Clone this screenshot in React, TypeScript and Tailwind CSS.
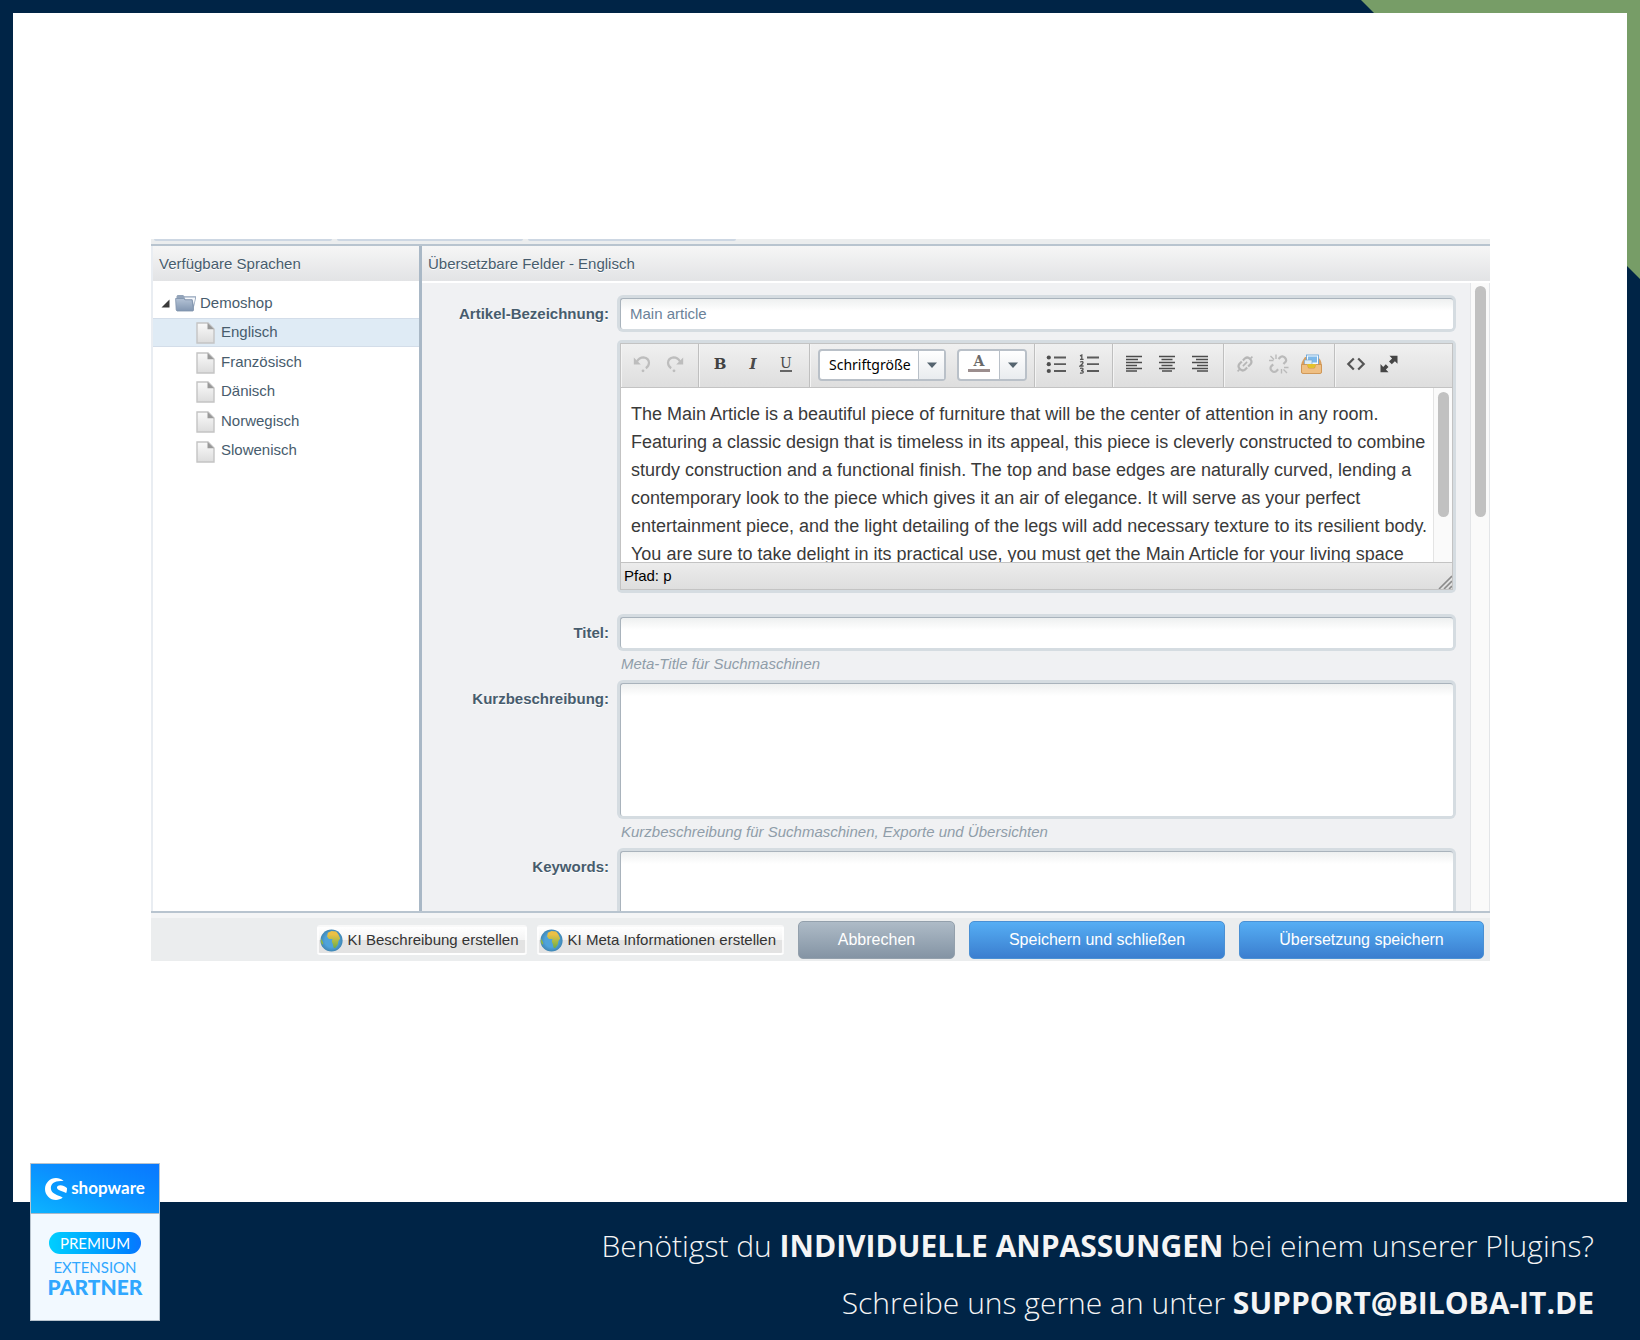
import type { ReactNode } from "react";
import { SiShopware } from "react-icons/si";

const LANGUAGES = ["Englisch", "Französisch", "Dänisch", "Norwegisch", "Slowenisch"];

const ARTICLE_TEXT =
  "The Main Article is a beautiful piece of furniture that will be the center of attention in any room. Featuring a classic design that is timeless in its appeal, this piece is cleverly constructed to combine sturdy construction and a functional finish. The top and base edges are naturally curved, lending a contemporary look to the piece which gives it an air of elegance. It will serve as your perfect entertainment piece, and the light detailing of the legs will add necessary texture to its resilient body. You are sure to take delight in its practical use, you must get the Main Article for your living space";

const FIELD =
  "block w-full rounded-[3px] border-t border-l border-[#a9b3bc] bg-white bg-linear-to-b from-[#eef0f0] to-white to-[12px] px-[9px] text-[15px] text-[#6b8299] ring-3 ring-[#d5dce1] outline-none resize-none";

function FolderIcon() {
  return (
    <svg width="22" height="18" viewBox="0 0 22 18" aria-hidden="true">
      <defs>
        <linearGradient id="folder" x1="0" y1="0" x2="0" y2="1">
          <stop offset="0" stopColor="#b4c3d6" />
          <stop offset="1" stopColor="#8296b1" />
        </linearGradient>
      </defs>
      <path d="M1.5 6V2.2L2.5 1H8L9.5 2.2H21V4L18.5 15L17 16Z" fill="#93a4ba" />
      <path d="M9.5 3.5H20.2L18.8 11L17.6 5.500H10.500Z" fill="#f6f8fb" />
      <path d="M.6 4.500H8.500L10 5.800H17L18.600 16L18 17H2L1.200 16Z" fill="url(#folder)" stroke="#7f92ab" strokeWidth=".8" />
    </svg>
  );
}

function PageIcon() {
  return (
    <svg width="19" height="22" viewBox="0 0 19 22" aria-hidden="true">
      <defs>
        <linearGradient id="page" x1="0" y1="0" x2="0" y2="1">
          <stop offset="0" stopColor="#fafafa" />
          <stop offset="1" stopColor="#dcdcdc" />
        </linearGradient>
      </defs>
      <path d="M1 1H12L18 7V21H1Z" fill="url(#page)" stroke="#c4c4c4" strokeWidth="1.4" />
      <path d="M11.5 1L18 7.2H11.5Z" fill="#999" />
    </svg>
  );
}

function GlobeIcon() {
  return (
    <svg width="23" height="23" viewBox="0 0 22 22" aria-hidden="true">
      <defs>
        <linearGradient id="land" x1="0" y1="0" x2="0" y2="1">
          <stop offset="0.2" stopColor="#ecc044" />
          <stop offset="0.6" stopColor="#a9bb45" />
          <stop offset="1" stopColor="#6faa48" />
        </linearGradient>
        <radialGradient id="sea">
          <stop offset="0.6" stopColor="#4fa3da" />
          <stop offset="1" stopColor="#3f86b4" />
        </radialGradient>
      </defs>
      <circle cx="11" cy="11" r="10.6" fill="url(#sea)" />
      <path d="M7.5 3.5L11 2L15.5 2.5L17.5 5L19.3 9L17.6 11.5L17 15L14.5 18.3L13 18L12.3 14.5L11.3 12L12 9.6L8.5 9.5L6.8 7.5Z" fill="url(#land)" />
      <path d="M1 9L2.6 12L3.2 14L2 15Q.3 12 1 9Z" fill="#8db548" />
    </svg>
  );
}

function ToolIcon({ label, children }: { label: string; children: ReactNode }) {
  return (
    <button type="button" aria-label={label} className="flex h-8 w-8 items-center justify-center">
      {children}
    </button>
  );
}

function ToolGroup({ children, last = false }: { children: ReactNode; last?: boolean }) {
  return (
    <div
      className={
        last
          ? "flex flex-1 items-start gap-px border-l border-[#f4f4f4] pt-1 pl-1"
          : "flex items-start gap-px border-r border-l border-r-[#bfbfbf] border-l-[#f4f4f4] pt-1 pr-[7px] pl-1"
      }
    >
      {children}
    </div>
  );
}

function UndoIcon({ flip = false }: { flip?: boolean }) {
  return (
    <svg width="20" height="20" viewBox="0 0 20 20" aria-hidden="true" className={flip ? "-scale-x-100" : ""}>
      <path d="M5 7.500Q7 3.300 11.500 3.300Q16.800 4 17 8.800Q16.800 12.500 13.800 14.300" fill="none" stroke="#bdbdbd" strokeWidth="2.2" />
      <path d="M1.800 3.500V10.500H8.800Z" fill="#bdbdbd" />
      <circle cx="11" cy="16.800" r="1.400" fill="#bdbdbd" />
    </svg>
  );
}

function ListIcon({ numbered = false }: { numbered?: boolean }) {
  return (
    <svg width="20" height="20" viewBox="0 0 20 20" aria-hidden="true">
      <path d="M8 3.5H20M8 10.2H20M8 17H20" stroke="#5b5b5b" strokeWidth="1.8" />
      {numbered ? (
        <path
          d="M1 1.8L2.8 1V5.4M1 5.4H4.6M1 8Q4.2 7 4 8.8Q3.6 10.2 1 12H4.6M1 14.4Q4.4 13.6 4 15.4Q3.8 16.4 2 16.6Q4.4 16.8 4.2 18.2Q3.8 19.6 1 19"
          fill="none"
          stroke="#555"
          strokeWidth="1.3"
        />
      ) : (
        <g fill="#4f4f4f">
          <circle cx="2.8" cy="3.5" r="2.1" />
          <circle cx="2.8" cy="10.2" r="2.1" />
          <circle cx="2.8" cy="17" r="2.1" />
        </g>
      )}
    </svg>
  );
}

const ALIGN_PATHS = {
  left: "M1 2.5H17M1 5.5H13M1 8.5H17M1 11.5H12M1 14.5H17M1 17H12",
  center: "M1 2.5H17M3.5 5.5H14.5M1 8.5H17M3.5 11.5H14.5M1 14.5H17M4 17H14",
  right: "M1 2.5H17M5 5.5H17M1 8.5H17M6 11.5H17M1 14.5H17M6 17H17",
};

function AlignIcon({ kind }: { kind: keyof typeof ALIGN_PATHS }) {
  return (
    <svg width="18" height="19" viewBox="0 0 18 19" aria-hidden="true">
      <path d={ALIGN_PATHS[kind]} stroke="#4c4c4c" strokeWidth="1.6" />
    </svg>
  );
}

function LinkIcon() {
  return (
    <svg width="18" height="18" viewBox="0 0 18 18" aria-hidden="true" fill="none" stroke="#b6b6b6">
      <g transform="rotate(-45 9 9)">
        <path d="M8.500 5H5Q1.800 5.500 1.800 9Q1.800 12.500 5 13H8M10 5H13Q16.200 5.500 16.200 9Q16.200 12.500 13 13H9.500" strokeWidth="2.200" />
        <path d="M-1.500 9H1.500M16.500 9H19.500M6 9H12" strokeWidth="1.600" />
      </g>
    </svg>
  );
}

function UnlinkIcon() {
  return (
    <svg width="21" height="20" viewBox="0 0 21 20" aria-hidden="true" fill="none" stroke="#bababa">
      <g transform="rotate(-45 10.5 10)">
        <path d="M6.500 6.500H3.500Q1 7 1 10Q1 13 3.500 13.500H6.500M14 6.500H17Q19.500 7 19.500 10Q19.500 13 17 13.500H14" strokeWidth="2.200" />
      </g>
      <path d="M8 .5V5M1 6.500H5.500M2.500 2L6 5.500M13.500 15V19.500M16 13.500H20.500M15.500 15.500L19 19" strokeWidth="1.400" />
    </svg>
  );
}

function MediaIcon() {
  return (
    <svg width="23" height="20" viewBox="0 0 23 20" aria-hidden="true">
      <path d="M3 6L5 3H18L20.500 6L21.500 9V19H1.500V9Z" fill="#d99f5e" />
      <rect x="6.500" y="1" width="12" height="11" fill="#f6fafd" stroke="#5f9fd6" strokeWidth=".8" />
      <rect x="8" y="2.500" width="9" height="6" fill="#7db9ea" />
      <path d="M4.500 6H12V12H4.500Z" fill="#dcecf8" stroke="#7fa9cb" strokeWidth=".7" />
      <path d="M1.500 10.500H7.500L8.500 14H14.500L15.500 10.500H21.500V18Q21.500 19.500 20 19.500H3Q1.500 19.500 1.500 18Z" fill="#efbf83" stroke="#cd9250" strokeWidth=".9" />
      <path d="M7.500 10H15.500V12L14 14H9L7.500 12Z" fill="#e3c22c" />
    </svg>
  );
}

function CodeIcon() {
  return (
    <svg width="20" height="14" viewBox="0 0 20 14" aria-hidden="true" fill="none" stroke="#555" strokeWidth="2.200">
      <path d="M7.800 1.500L2.300 7L7.800 12.500M12.200 1.500L17.700 7L12.200 12.500" />
    </svg>
  );
}

function ExpandIcon() {
  return (
    <svg width="18" height="18" viewBox="0 0 18 18" aria-hidden="true" fill="#454545">
      <path d="M9.500 .8H17.500V8.800L14.900 6.200L11.800 9.300L9 6.500L12.100 3.400Z" />
      <path d="M.5 9V17.200H8.500L5.900 14.600L8.500 12L5.800 9.300L3.200 11.900Z" />
    </svg>
  );
}

function Arrow() {
  return (
    <svg width="10" height="6" viewBox="0 0 10 6" aria-hidden="true">
      <path d="M0 .5H10L5 6Z" fill="#55646f" />
    </svg>
  );
}

function Toolbar() {
  return (
    <div className="flex h-[45px] items-stretch border border-[#c3c3c3] bg-linear-to-b from-[#f0f0f0] to-[#dedede]">
      <ToolGroup>
        <ToolIcon label="Rückgängig">
          <UndoIcon />
        </ToolIcon>
        <ToolIcon label="Wiederholen">
          <UndoIcon flip />
        </ToolIcon>
      </ToolGroup>
      <ToolGroup>
        <ToolIcon label="Fett">
          <span className="font-['DejaVu_Serif'] text-[15px] leading-5 font-bold text-[#424242]">B</span>
        </ToolIcon>
        <ToolIcon label="Kursiv">
          <span className="font-['DejaVu_Serif'] text-[15px] leading-5 font-bold text-[#4a4a4a] italic">I</span>
        </ToolIcon>
        <ToolIcon label="Unterstrichen">
          <span className="border-b-2 border-[#666] font-['DejaVu_Serif'] text-[14px] leading-[14px] text-[#4a4a4a]">U</span>
        </ToolIcon>
      </ToolGroup>
      <div className="flex items-start gap-[11px] border-r border-l border-r-[#bfbfbf] border-l-[#f4f4f4] pt-[5px] pr-[7px] pl-[7px]">
        <div className="relative h-8 w-32">
          <select
            aria-label="Schriftgröße"
            className="h-8 w-full appearance-none rounded-[4px] border-2 border-[#b9c0c8] bg-white pl-[9px] font-['Noto_Sans'] text-[14px] text-black"
          >
            <option>Schriftgröße</option>
          </select>
          <span className="pointer-events-none absolute inset-y-0.5 right-0.5 flex w-[26px] items-center justify-center border-l border-[#b9c0c8] bg-linear-to-b from-white to-[#e9ecef]">
            <Arrow />
          </span>
        </div>
        <div className="flex h-8 w-[70px] overflow-hidden rounded-[4px] border-2 border-[#b9c0c8] bg-white">
          <button type="button" aria-label="Textfarbe" className="flex flex-1 items-start justify-center pt-0.5">
            <span className="w-[22px] border-b-3 border-[#9c8e8e] text-center font-['DejaVu_Serif'] text-[14px] leading-4 font-bold text-[#6a6a6a]">
              A
            </span>
          </button>
          <button
            type="button"
            aria-label="Textfarbe wählen"
            className="flex w-[26px] items-center justify-center border-l border-[#b9c0c8] bg-linear-to-b from-white to-[#e9ecef]"
          >
            <Arrow />
          </button>
        </div>
      </div>
      <ToolGroup>
        <ToolIcon label="Aufzählung">
          <ListIcon />
        </ToolIcon>
        <ToolIcon label="Nummerierung">
          <ListIcon numbered />
        </ToolIcon>
      </ToolGroup>
      <ToolGroup>
        <ToolIcon label="Linksbündig">
          <AlignIcon kind="left" />
        </ToolIcon>
        <ToolIcon label="Zentriert">
          <AlignIcon kind="center" />
        </ToolIcon>
        <ToolIcon label="Rechtsbündig">
          <AlignIcon kind="right" />
        </ToolIcon>
      </ToolGroup>
      <ToolGroup>
        <ToolIcon label="Link einfügen">
          <LinkIcon />
        </ToolIcon>
        <ToolIcon label="Link entfernen">
          <UnlinkIcon />
        </ToolIcon>
        <ToolIcon label="Medien">
          <MediaIcon />
        </ToolIcon>
      </ToolGroup>
      <ToolGroup last>
        <ToolIcon label="Quelltext">
          <CodeIcon />
        </ToolIcon>
        <ToolIcon label="Vollbild">
          <ExpandIcon />
        </ToolIcon>
      </ToolGroup>
    </div>
  );
}

function Row({ label, htmlFor, children }: { label?: string; htmlFor: string; children: ReactNode }) {
  return (
    <div className="flex gap-[11px]">
      <div className="w-[187px] shrink-0 text-right">
        {label && (
          <label htmlFor={htmlFor} className="text-[15px] leading-8 font-bold text-[#475c6d] [text-shadow:0_1px_0_#fff]">
            {label}
          </label>
        )}
      </div>
      <div className="min-w-0 flex-1">{children}</div>
    </div>
  );
}

function Help({ children }: { children: ReactNode }) {
  return <p className="mt-1.5 mb-[9px] pl-px text-[15px] leading-5 text-[#8f9da9] italic">{children}</p>;
}

function Header({ children }: { children: ReactNode }) {
  return (
    <h2 className="border-b-2 border-white bg-linear-to-b from-[#f6f6f6] to-[#e2e3e5] pl-1.5 text-[15px] leading-[35px] text-[#475c6d] [text-shadow:0_1px_0_#fff]">
      {children}
    </h2>
  );
}

function TranslationWindow() {
  return (
    <section className="w-full overflow-hidden bg-[#ebedee] font-['Liberation_Sans',sans-serif]">
      <div className="flex h-[5px] gap-[5px] pl-[3px]">
        <span className="h-0.5 w-[178px] rounded-b bg-[#cdd7e3]" />
        <span className="h-0.5 w-[186px] rounded-b bg-[#cdd7e3]" />
        <span className="h-0.5 w-[208px] rounded-b bg-[#cdd7e3]" />
      </div>
      <div className="flex h-[669px] border-y-2 border-[#b8c4cf]">
        <aside className="w-[268px] shrink-0 border-l-2 border-[#e9edf2] bg-white">
          <Header>Verfügbare Sprachen</Header>
          <div className="flex h-[35px] items-center pt-1.5 pl-2 text-[15px] text-[#475c6d]">
            <svg width="9" height="9" viewBox="0 0 9 9" aria-hidden="true">
              <path d="M8.500 .5V8.500H.5Z" fill="#3a3a3a" />
            </svg>
            <span className="ml-[5px]">
              <FolderIcon />
            </span>
            <span className="ml-[3px]">Demoshop</span>
          </div>
          <ul className="flex h-[148px] flex-col">
            {LANGUAGES.map((name, i) => (
              <li key={name} className="flex-1">
                <button
                  type="button"
                  className={
                    i === 0
                      ? "flex h-full w-full items-center gap-1.5 border-y border-[#d3dde9] bg-[#dfebf5] pt-0.5 pl-[43px] text-[15px] text-[#475c6d]"
                      : "flex h-full w-full items-center gap-1.5 pt-0.5 pl-[43px] text-[15px] text-[#475c6d]"
                  }
                >
                  <PageIcon />
                  <span className="pb-0.5">{name}</span>
                </button>
              </li>
            ))}
          </ul>
        </aside>
        <div className="flex min-w-0 flex-1 flex-col border-l-3 border-[#a9b8c6] bg-[#f0f1f3]">
          <Header>Übersetzbare Felder - Englisch</Header>
          <div className="flex min-h-0 flex-1">
            <form className="min-w-0 flex-1 overflow-hidden pt-[15px] pr-[17px]">
              <Row label="Artikel-Bezeichnung:" htmlFor="name">
                <input id="name" defaultValue="Main article" className={FIELD + " h-[31px]"} />
              </Row>
              <div className="mt-[13px] mb-[27px]">
                <Row htmlFor="editor">
                  <div className="rounded-[2px] ring-3 ring-[#d5dce1]">
                    <Toolbar />
                    <div className="flex h-[174px] border-x border-[#c3c3c3] bg-white">
                      <textarea
                        id="editor"
                        aria-label="Beschreibung"
                        defaultValue={ARTICLE_TEXT}
                        className="min-w-0 flex-1 resize-none overflow-hidden pt-3 pl-2.5 text-[18px] leading-7 text-[#3a3a3a] outline-none"
                      />
                      <div className="w-[19px] border-l border-[#e4e4e4] bg-[#fafafa] pt-1 pl-1">
                        <div className="h-[125px] w-[11px] rounded-full bg-[#c1c1c1]" />
                      </div>
                    </div>
                    <div className="flex h-7 items-center justify-between border border-[#c3c3c3] bg-linear-to-b from-[#ececec] to-[#dedede] pl-[3px] text-[15px] text-black">
                      <span className="pt-0.5">Pfad: p</span>
                      <svg width="14" height="14" viewBox="0 0 14 14" aria-hidden="true" className="self-end">
                        <path d="M1 14L14 1M6 14L14 6M11 14L14 11" stroke="#8b8b8b" strokeWidth="1.600" />
                      </svg>
                    </div>
                  </div>
                </Row>
              </div>
              <Row label="Titel:" htmlFor="title">
                <input id="title" className={FIELD + " h-[31px]"} />
                <Help>Meta-Title für Suchmaschinen</Help>
              </Row>
              <Row label="Kurzbeschreibung:" htmlFor="short">
                <textarea id="short" className={FIELD + " h-[133px]"} />
                <Help>Kurzbeschreibung für Suchmaschinen, Exporte und Übersichten</Help>
              </Row>
              <Row label="Keywords:" htmlFor="keywords">
                <textarea id="keywords" className={FIELD + " h-[133px]"} />
              </Row>
            </form>
            <div className="w-5 border-x border-[#e3e5e8] bg-[#fafafa] pt-[3px] pl-1">
              <div className="h-[231px] w-[11px] rounded-full bg-[#c1c1c1]" />
            </div>
          </div>
        </div>
      </div>
      <footer className="flex h-12 items-center justify-end border-t-5 border-[#f4f5f6] pt-0.5 pr-1.5 text-[15px]">
        <button
          type="button"
          className="mr-2.5 flex h-[30px] items-center gap-[5px] rounded-[3px] border-2 border-white/80 bg-linear-to-b from-white via-[#f4f4f4] via-50% to-[#e3e3e3] to-50% pr-1.5 pl-px text-[#333]"
        >
          <GlobeIcon />
          KI Beschreibung erstellen
        </button>
        <button
          type="button"
          className="mr-3.5 flex h-[30px] items-center gap-[5px] rounded-[3px] border-2 border-white/80 bg-linear-to-b from-white via-[#f4f4f4] via-50% to-[#e3e3e3] to-50% pr-1.5 pl-px text-[#333]"
        >
          <GlobeIcon />
          KI Meta Informationen erstellen
        </button>
        <div className="flex gap-3.5 text-[16px] text-white [text-shadow:0_1px_1px_rgba(0,0,0,0.4)]">
          <button
            type="button"
            className="h-[38px] w-[157px] rounded-[5px] border border-[#93a0ac] bg-linear-to-b from-[#aebbc7] to-[#8494a4]"
          >
            Abbrechen
          </button>
          <button
            type="button"
            className="h-[38px] w-64 rounded-[5px] border border-[#4a90d4] bg-linear-to-b from-[#56aef4] to-[#3b7ecf]"
          >
            Speichern und schließen
          </button>
          <button
            type="button"
            className="h-[38px] w-[245px] rounded-[5px] border border-[#4a90d4] bg-linear-to-b from-[#56aef4] to-[#3b7ecf]"
          >
            Übersetzung speichern
          </button>
        </div>
      </footer>
    </section>
  );
}

function PartnerBadge() {
  return (
    <div className="absolute bottom-[19px] left-[30px] flex h-[158px] w-[130px] flex-col border border-[#b9c4ce] bg-[#f2f9ff] font-['Lato',sans-serif]">
      <div className="flex h-[50px] items-center justify-center gap-1 border-b border-[#a9b9c9] bg-linear-to-tr from-[#0fb4ff] via-[#0c90ff] to-[#0a78ff] text-white">
        <SiShopware size={22} aria-hidden="true" />
        <span className="pb-0.5 text-[17px] leading-5 font-bold">shopware</span>
      </div>
      <div className="flex flex-col items-center pt-[18px] text-[#30a7ff]">
        <span className="h-[22px] w-[92px] rounded-full bg-linear-to-r from-[#00cfff] to-[#0a76ff] text-center text-[15px] leading-[22px] text-white">
          PREMIUM
        </span>
        <span className="mt-1 text-[15px] leading-[18px]">EXTENSION</span>
        <span className="text-[21px] leading-[22px] font-black">PARTNER</span>
      </div>
    </div>
  );
}

export default function App() {
  return (
    <div className="relative isolate flex min-h-screen flex-col bg-[#002446]">
      <div className="absolute top-0 right-0 -z-10 size-[279px] bg-[#779d67] [clip-path:polygon(0_0,100%_0,100%_100%)]" />
      <main className="mx-[13px] mt-[13px] flex flex-1 items-center bg-white pr-[137px] pb-4 pl-[138px]">
        <TranslationWindow />
      </main>
      <footer className="flex h-[138px] flex-col items-end pt-[15px] pr-[46px] font-['Open_Sans',sans-serif] text-[30px] leading-[57px] font-light text-[#f5f5f5]">
        <p>
          Benötigst du <strong className="font-bold">INDIVIDUELLE ANPASSUNGEN</strong> bei einem unserer Plugins?
        </p>
        <p>
          Schreibe uns gerne an unter{" "}
          <a href="mailto:support@biloba-it.de" className="font-bold">
            SUPPORT@BILOBA-IT.DE
          </a>
        </p>
      </footer>
      <PartnerBadge />
    </div>
  );
}
